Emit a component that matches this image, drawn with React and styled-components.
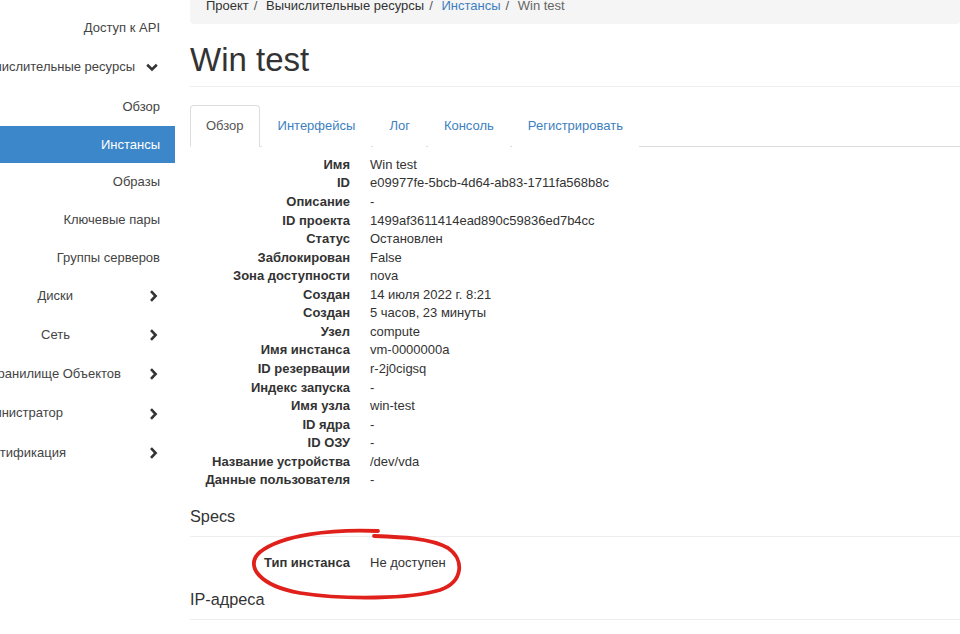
import React from "react";
import styled, { createGlobalStyle } from "styled-components";

const Global = createGlobalStyle`
  html, body { margin: 0; padding: 0; background: #fff; }
  body {
    font-family: "Liberation Sans", Arial, Helvetica, sans-serif;
    font-size: 13px;
    line-height: 1.42857;
    color: #333;
    overflow: hidden;
  }
  * { box-sizing: border-box; }
`;

const Page = styled.div`
  display: flex;
  width: 960px;
  height: 634px;
  overflow: hidden;
  position: relative;
`;

const Sidebar = styled.nav`
  width: 175px;
  flex-shrink: 0;
  overflow: hidden;
  padding-top: 9px;
  display: flex;
  flex-direction: column;
`;

const SubItem = styled.a`
  display: block;
  height: 37.75px;
  line-height: 37.75px;
  padding-right: 15px;
  text-align: right;
  white-space: nowrap;
  text-decoration: none;
  color: ${(p) => (p.$active ? "#fff" : "#444")};
  background: ${(p) => (p.$active ? "#3c87c9" : "transparent")};
`;

const Header = styled.a`
  display: flex;
  justify-content: flex-end;
  align-items: center;
  height: ${(p) => p.$h}px;
  padding-right: 17px;
  white-space: nowrap;
  color: #444;
  text-decoration: none;
`;

const HeaderLabel = styled.span`
  flex-shrink: 0;
  margin-right: ${(p) => p.$gap}px;
`;

const Chevron = styled.svg`
  flex-shrink: 0;
  display: block;
`;

const Main = styled.main`
  flex: 1;
  min-width: 0;
  padding-left: 15px;
  display: flex;
  flex-direction: column;
`;

const Breadcrumb = styled.ol`
  display: flex;
  list-style: none;
  margin: -11px 0 0;
  padding: 8px 15px 8px 16px;
  background: #f5f5f5;
  border-radius: 4px;
  white-space: nowrap;
`;

const Crumb = styled.li`
  color: ${(p) => (p.$last ? "#666" : "#333")};
  &:not(:first-child)::before {
    content: "/\\00a0";
    padding: 0 5px;
    color: #555;
  }
`;

const CrumbLink = styled.a`
  color: #3e7fc1;
  text-decoration: none;
`;

const PageHeader = styled.div`
  margin-top: 18px;
  padding-bottom: 8px;
  border-bottom: 1px solid #eee;
`;

const Title = styled.h1`
  margin: 0;
  font-size: 33px;
  line-height: 1.1;
  font-weight: 500;
  color: #333;
`;

const Tabs = styled.ul`
  display: flex;
  list-style: none;
  margin: 18px 0 0;
  padding: 0;
  border-bottom: 1px solid #ddd;
`;

const Tab = styled.li`
  margin-right: 2px;
  margin-bottom: -1px;
`;

const TabLink = styled.a`
  display: block;
  padding: 10px 15px;
  line-height: 20px;
  text-decoration: none;
  border: 1px solid ${(p) => (p.$active ? "#ddd" : "transparent")};
  border-bottom-color: ${(p) => (p.$active ? "#fff" : "transparent")};
  border-radius: 4px 4px 0 0;
  background: #fff;
  color: ${(p) => (p.$active ? "#555" : "#3e7fc1")};
`;

const DL = styled.dl`
  display: grid;
  grid-template-columns: 160px 1fr;
  column-gap: 20px;
  margin: ${(p) => p.$top}px 0 0;
`;

const DT = styled.dt`
  font-weight: bold;
  text-align: right;
  white-space: nowrap;
`;

const DD = styled.dd`
  margin: 0;
  white-space: nowrap;
`;

const SectionTitle = styled.h4`
  margin: 18.5px 0 0;
  padding-bottom: 9.5px;
  border-bottom: 1px solid #eee;
  font-size: 16.25px;
  line-height: 1.1;
  font-weight: 500;
  color: #333;
`;

const Annotation = styled.svg`
  position: absolute;
  left: 0;
  top: 0;
  pointer-events: none;
`;

const ChevronRight = () => (
  <Chevron width="9" height="12" viewBox="0 0 9 12">
    <polyline points="2,1.2 6.6,6 2,10.8" fill="none" stroke="#333" strokeWidth="2.6" />
  </Chevron>
);

const ChevronDown = () => (
  <Chevron width="12" height="9" viewBox="0 0 12 9">
    <polyline points="1.2,1.8 6,6.4 10.8,1.8" fill="none" stroke="#333" strokeWidth="2.6" />
  </Chevron>
);

const details = [
  ["Имя", "Win test"],
  ["ID", "e09977fe-5bcb-4d64-ab83-1711fa568b8c"],
  ["Описание", "-"],
  ["ID проекта", "1499af3611414ead890c59836ed7b4cc"],
  ["Статус", "Остановлен"],
  ["Заблокирован", "False"],
  ["Зона доступности", "nova"],
  ["Создан", "14 июля 2022 г. 8:21"],
  ["Создан", "5 часов, 23 минуты"],
  ["Узел", "compute"],
  ["Имя инстанса", "vm-0000000a"],
  ["ID резервации", "r-2j0cigsq"],
  ["Индекс запуска", "-"],
  ["Имя узла", "win-test"],
  ["ID ядра", "-"],
  ["ID ОЗУ", "-"],
  ["Название устройства", "/dev/vda"],
  ["Данные пользователя", "-"],
];

const tabs = ["Обзор", "Интерфейсы", "Лог", "Консоль", "Регистрировать"];

export default function App() {
  return (
    <>
      <Global />
      <Page>
        <Sidebar>
          <SubItem>Доступ к API</SubItem>
          <Header $h={41}>
            <HeaderLabel $gap={11}>Вычислительные ресурсы</HeaderLabel>
            <ChevronDown />
          </Header>
          <SubItem>Обзор</SubItem>
          <SubItem $active>Инстансы</SubItem>
          <SubItem>Образы</SubItem>
          <SubItem>Ключевые пары</SubItem>
          <SubItem>Группы серверов</SubItem>
          <Header $h={39.2}>
            <HeaderLabel $gap={76}>Диски</HeaderLabel>
            <ChevronRight />
          </Header>
          <Header $h={39.2}>
            <HeaderLabel $gap={79}>Сеть</HeaderLabel>
            <ChevronRight />
          </Header>
          <Header $h={39.2}>
            <HeaderLabel $gap={28}>Хранилище Объектов</HeaderLabel>
            <ChevronRight />
          </Header>
          <Header $h={39.2}>
            <HeaderLabel $gap={86}>Администратор</HeaderLabel>
            <ChevronRight />
          </Header>
          <Header $h={39.2}>
            <HeaderLabel $gap={83}>Идентификация</HeaderLabel>
            <ChevronRight />
          </Header>
        </Sidebar>
        <Main>
          <Breadcrumb>
            <Crumb>Проект</Crumb>
            <Crumb>Вычислительные ресурсы</Crumb>
            <Crumb>
              <CrumbLink>Инстансы</CrumbLink>
            </Crumb>
            <Crumb $last>Win test</Crumb>
          </Breadcrumb>
          <PageHeader>
            <Title>Win test</Title>
          </PageHeader>
          <Tabs>
            {tabs.map((t, i) => (
              <Tab key={t}>
                <TabLink $active={i === 0}>{t}</TabLink>
              </Tab>
            ))}
          </Tabs>
          <DL $top={9}>
            {details.map(([k, v], i) => (
              <React.Fragment key={i}>
                <DT>{k}</DT>
                <DD>{v}</DD>
              </React.Fragment>
            ))}
          </DL>
          <SectionTitle>Specs</SectionTitle>
          <DL $top={17.5}>
            <DT>Тип инстанса</DT>
            <DD>Не доступен</DD>
          </DL>
          <SectionTitle>IP-адреса</SectionTitle>
        </Main>
        <Annotation width="960" height="634" viewBox="0 0 960 634">
          <path
            d="M 378 531 C 330 529, 282 535, 260 552 C 244 566, 260 586, 300 593 C 345 600, 410 599, 440 590 C 463 582, 465 560, 448 548 C 430 538, 402 537, 374 536"
            fill="none"
            stroke="#e0201b"
            strokeWidth="3.8"
            strokeLinecap="round"
            strokeLinejoin="round"
          />
        </Annotation>
      </Page>
    </>
  );
}
